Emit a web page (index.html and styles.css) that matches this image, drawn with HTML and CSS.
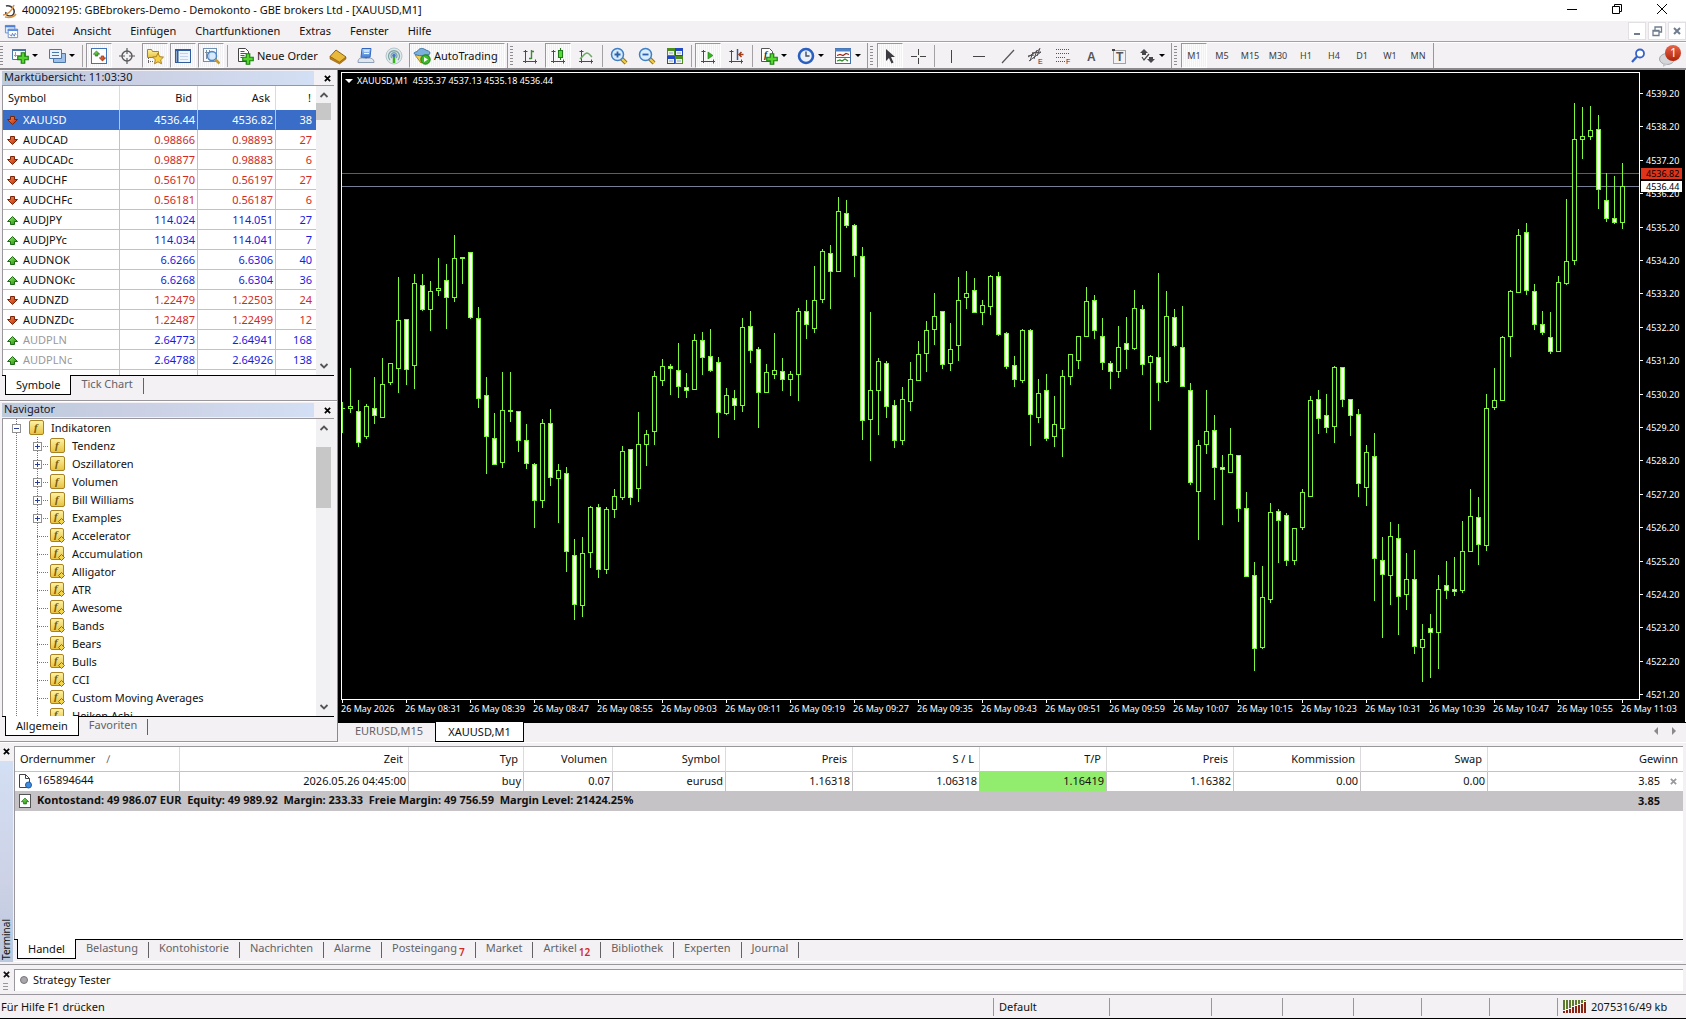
FILE: index.html
```html
<!DOCTYPE html>
<html lang="de">
<head>
<meta charset="utf-8">
<title>400092195: GBEbrokers-Demo - Demokonto</title>
<link rel="stylesheet" href="styles.css">
</head>
<body>
<svg class="defs" width="0" height="0" aria-hidden="true">
  <defs>
    <linearGradient id="gYellow" x1="0" y1="0" x2="0" y2="1"><stop offset="0" stop-color="#fdf3a8"/><stop offset="1" stop-color="#e9c23e"/></linearGradient>
    <linearGradient id="gRed" x1="0" y1="0" x2="1" y2="1"><stop offset="0" stop-color="#ff8a50"/><stop offset="1" stop-color="#b02a08"/></linearGradient>
    <linearGradient id="gGreen" x1="0" y1="0" x2="1" y2="1"><stop offset="0" stop-color="#90f060"/><stop offset="1" stop-color="#1f8a10"/></linearGradient>
    <linearGradient id="gBlue" x1="0" y1="0" x2="0" y2="1"><stop offset="0" stop-color="#b9dcff"/><stop offset="1" stop-color="#3f78cf"/></linearGradient>
    <linearGradient id="gBall" x1="0" y1="0" x2="0" y2="1"><stop offset="0" stop-color="#e8644a"/><stop offset="1" stop-color="#b02408"/></linearGradient>
    <symbol id="down" viewBox="0 0 11 11"><path d="M3.500 1.500h4v3h3L5.500 9.500 .500 4.500h3z" fill="url(#gRed)" stroke="#7c2408"/></symbol>
    <symbol id="up" viewBox="0 0 11 11"><path d="M3.500 9.500h4v-3h3L5.500 1.500 .500 6.500h3z" fill="url(#gGreen)" stroke="#1c6a12"/></symbol>
    <symbol id="fx" viewBox="0 0 15 15"><rect x=".5" y=".5" width="14" height="14" rx="1.500" fill="url(#gYellow)" stroke="#a98222"/><text x="5" y="11" class="glyph-f">f</text></symbol>
    <symbol id="fxd" viewBox="0 0 15 15"><rect x=".5" y=".5" width="13" height="13" rx="1.500" fill="url(#gYellow)" stroke="#a98222"/><text x="4" y="10" class="glyph-f">f</text><path d="M11.500 8.500l3 3-3 3-3-3z" fill="#f3d54c" stroke="#8f6a10"/></symbol>
    <symbol id="plus" viewBox="0 0 9 9"><rect x=".5" y=".5" width="8" height="8" fill="#fff" stroke="#919191"/><path d="M2 4.500h5M4.500 2v5" stroke="#2a3f9c"/></symbol>
    <symbol id="minus" viewBox="0 0 9 9"><rect x=".5" y=".5" width="8" height="8" fill="#fff" stroke="#919191"/><path d="M2 4.500h5" stroke="#2a3f9c"/></symbol>
    <symbol id="addp" viewBox="0 0 12 12"><path d="M4.500 1.500h3v3h3v3h-3v3h-3v-3h-3v-3h3z" fill="#55d62e" stroke="#1b7f12"/></symbol>
    <symbol id="axes" viewBox="0 0 18 18"><path d="M4.500 3v13M2.500 4.500h4M2 14.500h14M14.500 12.500v4" fill="none" stroke="#4b4b4f"/></symbol>
    <symbol id="x" viewBox="0 0 8 8"><path d="M1 1l6 6M7 1L1 7" stroke="currentColor" stroke-width="2"/></symbol>
    <symbol id="chevU" viewBox="0 0 10 10"><path d="M1.500 7L5 3.500 8.500 7" fill="none" stroke="#555" stroke-width="1.800"/></symbol>
    <symbol id="chevD" viewBox="0 0 10 10"><path d="M1.500 3L5 6.500 8.500 3" fill="none" stroke="#555" stroke-width="1.800"/></symbol>
  </defs>
</svg>

<header class="titlebar">
  <svg class="app-icon" viewBox="0 0 16 16"><path d="M4 3c3-1 7 1 8 4s-1 6-4 6-5-2-4-4" fill="none" stroke="#3d3d40" stroke-width="1.600"/><path d="M1 12c4 0 9-4 11-10M3 14c5 1 9 0 11-3" fill="none" stroke="#d9924a" stroke-width="1.600"/></svg>
  <span class="title-text">400092195: GBEbrokers-Demo - Demokonto - GBE brokers Ltd - [XAUUSD,M1]</span>
  <div class="window-buttons">
    <button aria-label="Minimieren"><svg viewBox="0 0 12 12"><path d="M1 6.500h10" stroke="#000"/></svg></button>
    <button aria-label="Wiederherstellen"><svg viewBox="0 0 12 12"><path d="M1.500 3.500h7v7h-7zM3.500 3V1.500h7v7H9" fill="none" stroke="#000"/></svg></button>
    <button aria-label="Schließen"><svg viewBox="0 0 12 12"><path d="M1 1l10 10M11 1L1 11" stroke="#000"/></svg></button>
  </div>
</header>

<nav class="menubar">
  <svg class="menu-icon" viewBox="0 0 16 16"><path d="M1.500 1.500h10v8h-10z" fill="#dfeafb" stroke="#6d8fc9"/><path d="M1 2.500h11" stroke="#4f7fd0" stroke-width="2"/><path d="M4.500 5.500h10v9h-10z" fill="#fff" stroke="#6d8fc9"/><path d="M4 6.500h11" stroke="#5b8be0" stroke-width="2"/><path d="M6 11l2 2 1-3 2 3 1-3 1 1" fill="none" stroke="#4f78c0"/></svg>
  <button>Datei</button><button>Ansicht</button><button>Einfügen</button><button>Chartfunktionen</button><button>Extras</button><button>Fenster</button><button>Hilfe</button>
  <div class="mdi-buttons">
    <button aria-label="Chart minimieren"><svg viewBox="0 0 12 12"><path d="M3 9h6" stroke="#6f7c8e" stroke-width="2"/></svg></button>
    <button aria-label="Chart wiederherstellen"><svg viewBox="0 0 12 12"><path d="M2 5.500h6v5H2zM4 5V2h6.500v5H8M4 2h6M2 6h6" fill="none" stroke="#6f7c8e" stroke-width="1.300"/></svg></button>
    <button aria-label="Chart schließen"><svg viewBox="0 0 12 12"><path d="M3 3l6 6M9 3L3 9" stroke="#6f7c8e" stroke-width="2"/></svg></button>
  </div>
</nav>

<div class="toolbar">
  <div class="group first">
    <i class="grip"></i>
    <button class="split" aria-label="Neuer Chart"><svg viewBox="0 0 18 18"><path d="M1.500 2.500h13v10h-13z" fill="#fff" stroke="#4a77a8"/><path d="M1 3h14" stroke="#4a77a8" stroke-width="2"/><path d="M4.500 5v5M3 8.500h8" stroke="#7fa3cf"/><use href="#addp" x="5" y="4" width="14" height="14"/></svg><i class="caret"></i></button>
    <button class="split" aria-label="Profile"><svg viewBox="0 0 18 18"><path d="M5.500 6.500h12v9h-12z" fill="#9fc0ea" stroke="#4a77a8"/><path d="M1.500 2.500h12v9h-12z" fill="#e9f2fd" stroke="#4a77a8"/><path d="M4 5.500h7M4 8.500h7" stroke="#4a77a8"/></svg><i class="caret"></i></button>
    <i class="sep"></i>
    <button class="tb on" aria-label="Marktübersicht"><svg viewBox="0 0 18 18"><rect x="1.500" y="1.500" width="15" height="15" fill="#fff" stroke="#3f75b8"/><use href="#up" x="3" y="3" width="7" height="7"/><use href="#down" x="9" y="8" width="7" height="7"/></svg></button>
    <button class="tb" aria-label="Datenfenster"><svg viewBox="0 0 18 18"><circle cx="9" cy="9" r="5" fill="none" stroke="#5a5a5e" stroke-width="1.400"/><path d="M9 1v6M9 11v6M1 9h6M11 9h6" stroke="#5a5a5e" stroke-width="1.200"/></svg></button>
    <button class="tb on" aria-label="Navigator"><svg viewBox="0 0 18 18"><path d="M1.500 2.500h4l1 2h6v6h-11z" fill="url(#gYellow)" stroke="#a98222"/><path d="M2.500 11v6M2 14.500h5" stroke="#666" stroke-dasharray="1 1"/><path d="M12 6l1.700 3.700 3.800.4-2.800 2.700.8 4-3.500-2-3.500 2 .8-4L6.500 10l3.800-.3z" fill="#f7d044" stroke="#a98222"/></svg></button>
    <button class="tb on" aria-label="Terminal"><svg viewBox="0 0 18 18"><rect x="1.500" y="2.500" width="15" height="13" fill="#eef5fd" stroke="#2f5d9e"/><path d="M1 3h16M3.500 3v12" stroke="#2f5d9e" stroke-width="2"/><path d="M6 6.500h8M6 9.500h8M6 12.500h8" stroke="#c0d4ec"/></svg></button>
    <button class="tb on" aria-label="Strategietester"><svg viewBox="0 0 18 18"><rect x="1.500" y="1.500" width="13" height="13" fill="#f8fafd" stroke="#6f8fb5"/><path d="M4.500 3v9M7.500 3v9M3 5.500h9" stroke="#7d8fa5"/><circle cx="10" cy="9" r="4.500" fill="#cfe5fa" fill-opacity=".8" stroke="#4f87c6" stroke-width="1.500"/><path d="M13.500 12.500l4 4" stroke="#c99b22" stroke-width="2.500"/></svg></button>
    <i class="sep"></i>
    <button class="label-btn order"><svg viewBox="0 0 18 18"><path d="M2.500 1.500h7l3 3v10h-10z" fill="#fff" stroke="#444"/><path d="M4.500 4.500h4M4.500 6.500h6M4.500 8.500h4M4.500 10.500h2" stroke="#555"/><use href="#addp" x="5" y="5" width="14" height="14"/></svg>Neue Order</button>
    <button class="tb" aria-label="MetaEditor"><svg viewBox="0 0 18 18"><path d="M1 9.500L7 3l10 7-6.500 6z" fill="#e9b93c" stroke="#8e6212"/><path d="M1 9.500L10.500 15l6.500-5v2l-6.500 5L1 12z" fill="#b97d1a" stroke="#8e6212" stroke-width=".6"/></svg></button>
    <button class="tb" aria-label="MQL5"><svg viewBox="0 0 18 18"><path d="M5 1.500h9l-1 9H4z" fill="url(#gBlue)" stroke="#2f67bf"/><path d="M7 4h5M7 6.500h5" stroke="#fff"/><path d="M1 15.500c0-5 3-5 8-4 5-1 8 0 8 4z" fill="#dfe6ef" stroke="#8fa0b6"/></svg></button>
    <button class="tb" aria-label="Signale"><svg viewBox="0 0 18 18"><circle cx="9" cy="9" r="8" fill="#dfe9ec" stroke="#b4c5ca"/><path d="M5 13a5.500 5.500 0 1 1 8 0M7 11a3 3 0 1 1 4 0" fill="none" stroke="#7fa5a8" stroke-width="1.300"/><path d="M9 9v7" stroke="#37b51b" stroke-width="2.500"/><circle cx="9" cy="8.500" r="1.800" fill="#4a76c8"/></svg></button>
    <button class="label-btn auto on"><svg viewBox="0 0 18 18"><path d="M2 8l6 8 7-4 1-5z" fill="#f0cf55" stroke="#b08a20"/><path d="M1 6.500c0-2 3-1 4-3s4-3 7-1 5 1 5 4c-3 3-13 3-16 0z" fill="#7db1dd" stroke="#3f76a8"/><circle cx="12.500" cy="12.500" r="4.700" fill="#3dba28" stroke="#1a7d10"/><path d="M11 10l4 2.500-4 2.500z" fill="#fff"/></svg>AutoTrading</button>
  </div>
  <div class="group">
    <i class="grip"></i>
    <button class="tb" aria-label="Balkenchart"><svg viewBox="0 0 18 18"><use href="#axes" width="18" height="18"/><path d="M10.500 3v9M8 11.500h2.500M10.500 4.500H13" stroke="#3d8a35" stroke-width="1.400"/></svg></button>
    <button class="tb on" aria-label="Kerzenchart"><svg viewBox="0 0 18 18"><use href="#axes" width="18" height="18"/><path d="M11.500 1v12" stroke="#257a1c"/><rect x="9.500" y="3.500" width="4" height="7" fill="#4fdc33" stroke="#257a1c"/></svg></button>
    <button class="tb" aria-label="Linienchart"><svg viewBox="0 0 18 18"><use href="#axes" width="18" height="18"/><path d="M3 12c3-3 5-6 7-6s3 2 5 4" fill="none" stroke="#6aaa60" stroke-width="1.500"/></svg></button>
    <i class="sep"></i>
    <button class="tb" aria-label="Vergrößern"><svg viewBox="0 0 18 18"><path d="M11 11l5 5" stroke="#8f6a10" stroke-width="4"/><path d="M11 11l5 5" stroke="#f1cb48" stroke-width="2.400"/><circle cx="7.500" cy="7.500" r="6" fill="#d8ecfc" stroke="#3f7fc6" stroke-width="1.500"/><path d="M4.500 7.500h6M7.500 4.500v6" stroke="#2b62a8" stroke-width="1.800"/></svg></button>
    <button class="tb" aria-label="Verkleinern"><svg viewBox="0 0 18 18"><path d="M11 11l5 5" stroke="#8f6a10" stroke-width="4"/><path d="M11 11l5 5" stroke="#f1cb48" stroke-width="2.400"/><circle cx="7.500" cy="7.500" r="6" fill="#d8ecfc" stroke="#3f7fc6" stroke-width="1.500"/><path d="M4.500 7.500h6" stroke="#2b62a8" stroke-width="1.800"/></svg></button>
    <button class="tb" aria-label="Anordnen"><svg viewBox="0 0 18 18"><rect x="1" y="1" width="8" height="8" fill="#4d8f1e"/><rect x="9" y="1" width="8" height="8" fill="#2348c4"/><rect x="1" y="9" width="8" height="8" fill="#2348c4"/><rect x="9" y="9" width="8" height="8" fill="#4d8f1e"/><path d="M2 4h6v4H2zM10 4h6v4h-6zM2 12h6v4H2zM10 12h6v4h-6z" fill="#eef4ea"/><path d="M3 6h4M11 6h4M3 14h4M11 14h4" stroke="#8aa6d8"/></svg></button>
    <i class="sep"></i>
    <button class="tb on" aria-label="Automatisch scrollen"><svg viewBox="0 0 18 18"><use href="#axes" width="18" height="18"/><path d="M9 5l5 3.500L9 12z" fill="#35b51f" stroke="#257a1c" stroke-width=".6"/></svg></button>
    <button class="tb" aria-label="Chart verschieben"><svg viewBox="0 0 18 18"><use href="#axes" width="18" height="18"/><path d="M10.500 2v11" stroke="#2e5d9a" stroke-width="1.500"/><path d="M16.500 7.500h-4M14.500 5L12 7.500l2.500 2.500" fill="none" stroke="#a33c18" stroke-width="1.500"/></svg></button>
    <i class="sep"></i>
    <button class="split" aria-label="Indikatoren"><svg viewBox="0 0 18 18"><path d="M1.500 1.500h8l3 3v10h-11z" fill="#fff" stroke="#555"/><text x="4" y="11" class="glyph-d">f</text><use href="#addp" x="5" y="5" width="14" height="14"/></svg><i class="caret"></i></button>
    <button class="split" aria-label="Periodizität"><svg viewBox="0 0 18 18"><circle cx="9" cy="9" r="7" fill="#e8f1fb" stroke="#2a5fc0" stroke-width="2.600"/><path d="M9 4.500V9h3.500" fill="none" stroke="#44505e" stroke-width="1.400"/></svg><i class="caret"></i></button>
    <button class="split" aria-label="Vorlagen"><svg viewBox="0 0 18 18"><rect x="1.500" y="1.500" width="15" height="15" fill="#fff" stroke="#3f6faa"/><path d="M1 3h16" stroke="#4f82c4" stroke-width="3"/><path d="M3 8.500l3-1 3 1 3-2 3 1" fill="none" stroke="#9a2a18" stroke-width="1.300"/><path d="M2 10.500h14" stroke="#3f6faa"/><path d="M3 14l3-1 2 1 3-2 3 2" fill="none" stroke="#2f8a2a" stroke-width="1.300"/></svg><i class="caret"></i></button>
  </div>
  <div class="group">
    <i class="grip"></i>
    <button class="tb on" aria-label="Zeiger"><svg viewBox="0 0 18 18"><path d="M5 2v12l3-3 2.500 5.500 2-1L10 10h4z" fill="#3c3c40"/></svg></button>
    <button class="tb" aria-label="Fadenkreuz"><svg viewBox="0 0 18 18"><path d="M9.500 2v6M9.500 11v6M2 9.500h6M11 9.500h6" stroke="#444"/></svg></button>
    <i class="sep"></i>
    <button class="tb" aria-label="Vertikale Linie"><svg viewBox="0 0 18 18"><path d="M9.500 3v13" stroke="#444"/></svg></button>
    <button class="tb" aria-label="Horizontale Linie"><svg viewBox="0 0 18 18"><path d="M3 9.500h12" stroke="#444"/></svg></button>
    <button class="tb" aria-label="Trendlinie"><svg viewBox="0 0 18 18"><path d="M4 16L16 3" stroke="#555" stroke-width="1.200"/></svg></button>
    <button class="tb" aria-label="Kanal"><svg viewBox="0 0 18 18"><path d="M2 10L14 2M3 14L15 5M4 14L7 5M8 12L11 3M11 9l3-8M2 9l6-1M7 6l8-1" stroke="#4d4d50" fill="none"/><text x="12" y="17" class="glyph-s">E</text></svg></button>
    <button class="tb" aria-label="Fibonacci"><svg viewBox="0 0 18 18"><path d="M2 2.500h13M2 6.500h13M2 10.500h9M2 14.500h9" stroke="#555" stroke-dasharray="1 1"/><text x="12" y="17" class="glyph-s">F</text></svg></button>
    <button class="tb" aria-label="Text"><svg viewBox="0 0 18 18"><text x="5" y="14" class="glyph-a">A</text></svg></button>
    <button class="tb" aria-label="Textfeld"><svg viewBox="0 0 18 18"><rect x="3.500" y="3.500" width="12" height="13" fill="none" stroke="#555" stroke-dasharray="1 1"/><path d="M2 2h3v2H2z" fill="#444"/><text x="6" y="14" class="glyph-a">T</text></svg></button>
    <button class="split" aria-label="Pfeile"><svg viewBox="0 0 18 18"><path d="M6 2l4 4H8v2H4V6H2zM13 16l-4-4h2v-2h4v2h2z" fill="#48484c"/><path d="M4 10l2 3 5-6" fill="none" stroke="#48484c" stroke-width="1.200"/></svg><i class="caret"></i></button>
  </div>
  <div class="group">
    <i class="grip"></i>
    <button class="tb on">M1</button><button class="tb">M5</button><button class="tb">M15</button><button class="tb">M30</button><button class="tb">H1</button><button class="tb">H4</button><button class="tb">D1</button><button class="tb">W1</button><button class="tb">MN</button>
  </div>
  <div class="tool-right">
    <button aria-label="Suchen"><svg width="16" height="16" viewBox="0 0 16 16"><circle cx="10" cy="5.500" r="4" fill="#fff" stroke="#3562c8" stroke-width="1.800"/><path d="M7 8.500L2 14" stroke="#3562c8" stroke-width="2.200"/></svg></button>
    <button class="notify" aria-label="Nachrichten"><svg width="24" height="24" viewBox="0 0 24 24"><ellipse cx="9" cy="15" rx="7.500" ry="5.500" fill="#d4d6da" stroke="#a4a6aa"/><path d="M5 19l0 4 5-3z" fill="#c5c7cb"/><circle cx="15" cy="9" r="8" fill="url(#gBall)"/></svg><span class="notify-count">1</span></button>
  </div>
</div>

<main class="workspace">
  <aside class="dock">
    <section class="panel market">
      <header class="panel-title"><span>Marktübersicht: 11:03:30</span><button aria-label="Marktübersicht schließen"><svg viewBox="0 0 8 8"><use href="#x"/></svg></button></header>
      <div class="panel-box">
        <div class="panel-content">
          <table class="quotes">
            <colgroup><col class="c-sym"><col class="c-bid"><col class="c-ask"><col class="c-spr"></colgroup>
            <thead><tr><th>Symbol</th><th>Bid</th><th>Ask</th><th>!</th></tr></thead>
            <tbody>
              <tr class="sel"><td><svg><use href="#down"/></svg>XAUUSD</td><td>4536.44</td><td>4536.82</td><td>38</td></tr>
              <tr class="dn"><td><svg><use href="#down"/></svg>AUDCAD</td><td>0.98866</td><td>0.98893</td><td>27</td></tr>
              <tr class="dn"><td><svg><use href="#down"/></svg>AUDCADc</td><td>0.98877</td><td>0.98883</td><td>6</td></tr>
              <tr class="dn"><td><svg><use href="#down"/></svg>AUDCHF</td><td>0.56170</td><td>0.56197</td><td>27</td></tr>
              <tr class="dn"><td><svg><use href="#down"/></svg>AUDCHFc</td><td>0.56181</td><td>0.56187</td><td>6</td></tr>
              <tr class="up"><td><svg><use href="#up"/></svg>AUDJPY</td><td>114.024</td><td>114.051</td><td>27</td></tr>
              <tr class="up"><td><svg><use href="#up"/></svg>AUDJPYc</td><td>114.034</td><td>114.041</td><td>7</td></tr>
              <tr class="up"><td><svg><use href="#up"/></svg>AUDNOK</td><td>6.6266</td><td>6.6306</td><td>40</td></tr>
              <tr class="up"><td><svg><use href="#up"/></svg>AUDNOKc</td><td>6.6268</td><td>6.6304</td><td>36</td></tr>
              <tr class="dn"><td><svg><use href="#down"/></svg>AUDNZD</td><td>1.22479</td><td>1.22503</td><td>24</td></tr>
              <tr class="dn"><td><svg><use href="#down"/></svg>AUDNZDc</td><td>1.22487</td><td>1.22499</td><td>12</td></tr>
              <tr class="up off"><td><svg><use href="#up"/></svg>AUDPLN</td><td>2.64773</td><td>2.64941</td><td>168</td></tr>
              <tr class="up off"><td><svg><use href="#up"/></svg>AUDPLNc</td><td>2.64788</td><td>2.64926</td><td>138</td></tr>
              <tr class="up"><td></td><td></td><td></td><td></td></tr>
            </tbody>
          </table>
        </div>
        <div class="scroll"><svg><use href="#chevU"/></svg><i class="thumb short"></i><svg class="end"><use href="#chevD"/></svg></div>
      </div>
      <div class="tabs"><button class="active">Symbole</button><button>Tick Chart</button></div>
    </section>
    <section class="panel navigator">
      <header class="panel-title"><span>Navigator</span><button aria-label="Navigator schließen"><svg viewBox="0 0 8 8"><use href="#x"/></svg></button></header>
      <div class="panel-box">
        <div class="panel-content">
          <ul class="tree">
            <li><svg class="exp"><use href="#minus"/></svg><svg class="fx"><use href="#fx"/></svg>Indikatoren
              <ul>
                <li><svg class="exp"><use href="#plus"/></svg><svg class="fx"><use href="#fx"/></svg>Tendenz</li>
                <li><svg class="exp"><use href="#plus"/></svg><svg class="fx"><use href="#fx"/></svg>Oszillatoren</li>
                <li><svg class="exp"><use href="#plus"/></svg><svg class="fx"><use href="#fx"/></svg>Volumen</li>
                <li><svg class="exp"><use href="#plus"/></svg><svg class="fx"><use href="#fx"/></svg>Bill Williams</li>
                <li><svg class="exp"><use href="#plus"/></svg><svg class="fx"><use href="#fxd"/></svg>Examples</li>
                <li><svg class="exp"></svg><svg class="fx"><use href="#fxd"/></svg>Accelerator</li>
                <li><svg class="exp"></svg><svg class="fx"><use href="#fxd"/></svg>Accumulation</li>
                <li><svg class="exp"></svg><svg class="fx"><use href="#fxd"/></svg>Alligator</li>
                <li><svg class="exp"></svg><svg class="fx"><use href="#fxd"/></svg>ATR</li>
                <li><svg class="exp"></svg><svg class="fx"><use href="#fxd"/></svg>Awesome</li>
                <li><svg class="exp"></svg><svg class="fx"><use href="#fxd"/></svg>Bands</li>
                <li><svg class="exp"></svg><svg class="fx"><use href="#fxd"/></svg>Bears</li>
                <li><svg class="exp"></svg><svg class="fx"><use href="#fxd"/></svg>Bulls</li>
                <li><svg class="exp"></svg><svg class="fx"><use href="#fxd"/></svg>CCI</li>
                <li><svg class="exp"></svg><svg class="fx"><use href="#fxd"/></svg>Custom Moving Averages</li>
                <li><svg class="exp"></svg><svg class="fx"><use href="#fxd"/></svg>Heiken Ashi</li>
              </ul>
            </li>
          </ul>
        </div>
        <div class="scroll"><svg><use href="#chevU"/></svg><i class="thumb long"></i><svg class="end"><use href="#chevD"/></svg></div>
      </div>
      <div class="tabs"><button class="active">Allgemein</button><button>Favoriten</button></div>
    </section>
  </aside>

  <section class="chart-area">
    <div class="chart">
      <div class="plot"><svg id="plot" width="100%" height="100%"></svg>
        <div class="chart-title"><i></i><span>XAUUSD,M1  4535.37 4537.13 4535.18 4536.44</span></div>
      </div>
      <svg id="scale" class="scale"></svg>
      <svg id="times" class="times"></svg>
    </div>
    <div class="tabs chart-tabs"><button>EURUSD,M15</button><button class="active">XAUUSD,M1</button><span class="arrows"><i class="left"></i><i class="right"></i></span></div>
  </section>
</main>

<section class="terminal">
  <div class="strip"><button aria-label="Terminal schließen"><svg viewBox="0 0 8 8"><use href="#x"/></svg></button><div class="strip-bar"><span>Terminal</span></div></div>
  <div class="terminal-main">
    <div class="orders-box">
      <table class="orders">
        <colgroup><col class="w165"><col class="w229"><col class="w115"><col class="w89"><col class="w113"><col class="w127"><col class="w127"><col class="w127"><col class="w127"><col class="w127"><col class="w127"><col class="w195"></colgroup>
        <thead><tr><th>Ordernummer <span class="sort">∕</span></th><th>Zeit</th><th>Typ</th><th>Volumen</th><th>Symbol</th><th>Preis</th><th>S / L</th><th>T/P</th><th>Preis</th><th>Kommission</th><th>Swap</th><th>Gewinn</th></tr></thead>
        <tbody>
          <tr><td><svg class="doc" viewBox="0 0 14 16"><path d="M1.500 1.500h6l4 4v9h-10z" fill="#fff" stroke="#444"/><path d="M7.500 1.500v4h4" fill="none" stroke="#444"/><circle cx="10.500" cy="12" r="3" fill="#3f8ade" stroke="#235a9e"/></svg>165894644</td><td>2026.05.26 04:45:00</td><td>buy</td><td>0.07</td><td>eurusd</td><td>1.16318</td><td>1.06318</td><td class="hit">1.16419</td><td>1.16382</td><td>0.00</td><td>0.00</td><td class="gain">3.85<button aria-label="Order schließen"><svg viewBox="0 0 8 8"><use href="#x"/></svg></button></td></tr>
          <tr class="sum"><td colspan="11"><svg class="doc" viewBox="0 0 14 16"><rect x="1.500" y="1.500" width="11" height="13" fill="#fff" stroke="#555"/><use href="#up" x="3" y="4" width="8" height="8"/></svg>Kontostand: 49 986.07 EUR  Equity: 49 989.92  Margin: 233.33  Freie Margin: 49 756.59  Margin Level: 21424.25%</td><td class="gain">3.85</td></tr>
        </tbody>
      </table>
    </div>
    <div class="tabs terminal-tabs"><button class="active">Handel</button><button>Belastung</button><button>Kontohistorie</button><button>Nachrichten</button><button>Alarme</button><button>Posteingang<sub>7</sub></button><button>Market</button><button>Artikel<sub>12</sub></button><button>Bibliothek</button><button>Experten</button><button>Journal</button></div>
  </div>
</section>

<section class="tester">
  <div class="tester-side"><button aria-label="Strategy Tester schließen"><svg viewBox="0 0 8 8"><use href="#x"/></svg></button><i></i></div>
  <div class="tester-box"><i class="dot"></i>Strategy Tester</div>
</section>

<footer class="status">
  <span class="help">Für Hilfe F1 drücken</span><span class="s116">Default</span><span class="s102"></span><span class="s71"></span><span class="s71"></span><span class="s68"></span><span class="s68"></span><span class="s68"></span>
  <span class="traffic"><svg width="24" height="13" viewBox="0 0 24 13"><path d="M1 0v10M4 0v9M7 0v8M10 0v6M13 0v5M16 0v4M19 0v3M22 0v1" stroke="#5c7a2c" stroke-width="2"/><path d="M1 11v2M4 10v3M7 9v4M10 7v6M13 6v7M16 5v8M19 4v9M22 2v11" stroke="#8a2412" stroke-width="2"/></svg>2075316/49 kb</span>
</footer>
<script src="chart.js"></script>
</body>
</html>
```
FILE: styles.css
```css
* { box-sizing: border-box; }
body {
  margin: 0;
  min-height: 100vh;
  display: flex;
  flex-direction: column;
  background: #f3f1f4;
  color: #111;
  font: 11px/16px "Noto Sans", "Open Sans", sans-serif;
  border-bottom: 1px solid #000;
}
button {
  font: inherit;
  color: inherit;
  background: none;
  border: 0;
  padding: 0;
  margin: 0;
}
ul { list-style: none; margin: 0; padding: 0; }
.defs { position: absolute; }
.glyph-f { font: italic bold 11px "Liberation Serif", serif; fill: #7a5a10; }
.glyph-d { font: italic bold 10px "Liberation Serif", serif; fill: #333; }
.glyph-s { font: 7px "Liberation Sans", sans-serif; fill: #333; }
.glyph-a { font: bold 12px "Liberation Sans", sans-serif; fill: #55555a; }

/* Title and menu */
.titlebar { display: flex; align-items: center; height: 21px; background: #fff; padding-left: 2px; }
.app-icon { width: 16px; height: 16px; margin-right: 4px; }
.title-text { flex: 1; padding-bottom: 2px; }
.window-buttons { display: flex; gap: 33px; padding-right: 18px; }
.window-buttons button { display: flex; padding-bottom: 4px; }
.window-buttons svg { width: 12px; height: 12px; }
.menubar { display: flex; align-items: center; gap: 19px; height: 21px; border-bottom: 1px solid #a3a1a4; padding-left: 4px; }
.menu-icon { width: 15px; height: 15px; margin-right: -11px; }
.mdi-buttons { display: flex; gap: 2px; margin-left: auto; }
.mdi-buttons button { display: grid; place-items: center; width: 18px; height: 18px; background: #fff; border: 1px solid #e2e0e4; }
.mdi-buttons svg { width: 12px; height: 12px; }

/* Toolbar */
.toolbar { display: flex; height: 28px; border-top: 1px solid #fff; border-bottom: 2px solid #8b898d; }
.group { display: flex; align-items: center; gap: 2px; padding: 0 2px; border-right: 1px solid #99979b; }
.group.first { padding-left: 0; }
.grip { width: 3px; height: 20px; margin-right: 2px; background: repeating-linear-gradient(#8f8d91 0 1px, #f3f1f4 1px 3px); }
.sep { width: 1px; height: 22px; margin: 0 1px; background: #a3a1a4; }
.tb { display: grid; place-items: center; width: 26px; height: 25px; font-size: 9px; line-height: 14px; color: #3d3d42; border: 1px solid transparent; }
.toolbar svg { display: block; }
.tb svg, .split svg, .label-btn svg { width: 18px; height: 18px; flex: none; }
.on { border: 1px solid; border-color: #99979b #fff #fff #99979b; background: repeating-linear-gradient(90deg, #fbfbfc 0 1px, #f1f0f3 1px 2px); }
.split { display: flex; align-items: center; gap: 3px; width: 35px; height: 25px; padding-left: 4px; }
.caret { border: 3px solid transparent; border-top: 3px solid #000; border-bottom: 0; }
.label-btn { display: flex; align-items: center; gap: 3px; height: 25px; padding-left: 5px; white-space: nowrap; }
.order { width: 92px; }
.auto { width: 96px; padding-left: 3px; }
.tool-right { display: flex; align-items: center; gap: 12px; margin-left: auto; padding-right: 4px; }
.notify { position: relative; }
.notify-count { position: absolute; left: 12px; top: 1px; color: #fff; font-size: 12px; }

/* Docked panels */
.workspace { display: flex; border-bottom: 1px solid #fff; }
.dock { width: 338px; flex: none; border-right: 1px solid #8b898d; border-bottom: 1px solid #99979b; }
.panel { padding: 1px 3px 0 2px; }
.market { border-bottom: 1px solid #99979b; height: 331px; }
.navigator { border-top: 1px solid #fff; }
.panel-title { display: flex; justify-content: space-between; align-items: center; height: 14px; line-height: 12px; color: #16162a; background: linear-gradient(90deg, #bccadc, #cbd0e4 40%, #d3dff4 94%, #f3f1f4 94%); padding: 0 3px 0 2px; }
.panel-title span { padding-bottom: 2px; }
.panel-title button, .strip button { display: grid; place-items: center; width: 8px; height: 8px; color: #000; }
.panel-title svg { width: 7px; height: 7px; }
.panel-box { display: flex; height: 290px; border-top: 1px solid #99979b; border-left: 1px solid #99979b; background: #fff; }
.navigator .panel-box { height: 298px; margin-top: 1px; }
.panel-content { flex: 1; overflow: hidden; }
.scroll { display: flex; flex-direction: column; align-items: center; width: 18px; background: #f1f0f3; padding: 4px 3px 4px 0; }
.scroll svg { width: 10px; height: 10px; flex: none; }
.scroll .end { margin-top: auto; }
.thumb { width: 15px; background: #c8c7c8; }
.short { height: 17px; margin-top: 3px; }
.long { height: 61px; margin-top: 14px; }

.tabs { display: flex; position: relative; height: 25px; padding-left: 3px; border-top: 1px solid #000; color: #646266; }
.tabs button { height: 16px; line-height: 12px; margin-top: 2px; padding: 0 10px 4px; border-right: 1px solid #646266; white-space: nowrap; }
.tabs button.active { height: 20px; line-height: 18px; margin-top: -1px; background: #fff; color: #111; border: solid #000; border-width: 0 1px 1px; padding: 0 10px; }

.quotes { width: 100%; table-layout: fixed; border-collapse: separate; border-spacing: 0; }
.quotes th { height: 24px; padding: 0 5px; font-weight: 400; text-align: right; border-right: 1px solid #dcdadd; }
.quotes th:first-child { text-align: left; }
.quotes td { height: 20px; padding: 0 2px; text-align: right; border-right: 1px solid #c4c2c5; border-bottom: 1px solid #c4c2c5; }
.quotes td:first-child { text-align: left; padding-left: 4px; color: #111; }
.quotes th:last-child, .quotes td:last-child { border-right: 0; }
.quotes td:last-child { padding-right: 4px; }
.quotes svg { width: 11px; height: 11px; margin-right: 5px; vertical-align: -2px; }
.c-sym { width: 117px; } .c-bid, .c-ask { width: 78px; } .c-spr { width: 40px; }
.dn td { color: #d22a1e; }
.up td { color: #1a1ae0; }
.quotes .off td:first-child { color: #9a989b; }
.quotes .sel td, .quotes .sel td:first-child { background: #3a6dc8; color: #fff; border-bottom-color: #3a6dc8; }

.tree { line-height: 18px; }
.tree li { white-space: nowrap; background: repeating-linear-gradient(#77757a 0 1px, transparent 1px 2px) 13px 0 / 1px 100% no-repeat; padding-left: 9px; }
.tree ul { margin-left: 12px; }
.tree ul li { height: 18px; background: repeating-linear-gradient(#77757a 0 1px, transparent 1px 2px) 13px 0 / 1px 100% no-repeat, repeating-linear-gradient(90deg, #77757a 0 1px, transparent 1px 2px) 13px 9px / 12px 1px no-repeat; }
.exp { width: 9px; height: 9px; margin-right: 8px; vertical-align: -1px; }
.fx { width: 15px; height: 15px; margin-right: 7px; vertical-align: -3px; }

/* Chart */
.chart-area { flex: 1; min-width: 0; }
.chart { display: grid; grid-template: 628px 21px / 1fr 45px; background: #000; padding: 2px 0 1px 3px; border-right: 1px solid #fff; height: 652px; }
.plot { position: relative; border: 1px solid #fff; overflow: hidden; }
.plot svg { display: block; }
.chart-title { position: absolute; left: 3px; top: 1px; display: flex; align-items: center; gap: 4px; color: #fff; font-size: 9px; line-height: 14px; white-space: pre; }
.chart-title i { border: 4px solid transparent; border-top-color: #fff; border-bottom: 0; }
.scale { width: 45px; height: 628px; }
.times { grid-column: 1 / 3; width: 100%; height: 21px; }
.scale text, .times text { font: 9px "Noto Sans", "Open Sans", sans-serif; fill: #fff; }
.scale .ask { fill: #000; }
.scale .bid { fill: #000; }
.chart-tabs { height: 20px; padding-left: 6px; padding-right: 8px; }
.chart-tabs button { border-right-color: transparent; }
.chart-tabs button:first-child { width: 91px; }
.chart-tabs button.active { width: 89px; }
.arrows { display: flex; gap: 14px; margin: 4px 2px 0 auto; }
.arrows i { height: 8px; border: 4px solid transparent; }
.arrows .left { border-right-color: #8b898d; border-left: 0; }
.arrows .right { border-left-color: #8b898d; border-right: 0; }

/* Terminal */
.terminal { flex: 1; display: flex; margin-top: 3px; border-bottom: 1px solid #99979b; padding-bottom: 2px; }
.strip { width: 14px; display: flex; flex-direction: column; }
.strip button { margin: 1px 0 6px 2px; }
.strip svg, .tester-side svg { width: 7px; height: 7px; }
.strip-bar { flex: 1; width: 13px; background: linear-gradient(#d3dff4, #cdd2e6 60%, #b9c8dc); display: flex; justify-content: center; align-items: flex-end; padding-bottom: 2px; }
.strip-bar span { writing-mode: vertical-rl; transform: rotate(180deg); line-height: 13px; font-size: 10px; }
.terminal-main { flex: 1; min-width: 0; display: flex; flex-direction: column; padding-right: 3px; }
.orders-box { flex: 1; background: #fff; border-top: 1px solid #99979b; border-left: 1px solid #99979b; }
.orders { width: 100%; table-layout: fixed; border-collapse: separate; border-spacing: 0; }
.orders th { height: 25px; padding: 0 5px 1px; font-weight: 400; text-align: right; border-right: 1px solid #dcdadd; border-bottom: 1px solid #c4c2c5; }
.orders td { height: 19px; line-height: 15px; padding: 0 2px 2px; text-align: right; border-right: 1px solid #c4c2c5; }
.orders th:first-child, .orders td:first-child { text-align: left; }
.orders td:first-child { padding-left: 3px; white-space: pre; }
.orders td:last-child, .orders th:last-child { border-right: 0; }
.sort { margin-left: 8px; color: #646266; }
.doc { width: 14px; height: 16px; margin-right: 5px; vertical-align: middle; }
.orders .hit { background: #92ec6e; }
.orders .gain { padding-right: 23px; position: relative; }
.gain button { position: absolute; right: 6px; top: 6px; width: 7px; height: 7px; color: #99979b; display: flex; }
.orders .sum td { height: 20px; background: #c5c3c6; border-right: 0; font-weight: 700; }
.w89 { width: 89px; } .w113 { width: 113px; } .w115 { width: 115px; } .w127 { width: 127px; }
.w165 { width: 165px; } .w195 { width: 195px; } .w229 { width: 229px; }
.terminal-tabs { height: 23px; border-bottom: 1px solid #fff; }
.terminal-tabs sub { color: #d22a1e; font-size: 10px; line-height: 0; font-weight: 600; margin-left: 2px; vertical-align: -4px; }

/* Tester and status */
.tester { display: flex; height: 30px; padding: 4px 3px 3px 0; border-bottom: 1px solid #99979b; }
.tester-side { width: 14px; padding: 2px 0 0 3px; display: flex; flex-direction: column; gap: 5px; }
.tester-side button { display: flex; }
.tester-side i { width: 5px; height: 8px; background: repeating-linear-gradient(#99979b 0 1px, transparent 1px 3px); }
.tester-box { flex: 1; display: flex; align-items: center; gap: 5px; background: #fff; border-top: 1px solid #99979b; border-left: 1px solid #99979b; padding: 0 0 2px 5px; }
.dot { width: 8px; height: 8px; border-radius: 50%; background: #a9a7ab; border: 1px solid #77757a; }
.status { display: flex; align-items: center; height: 23px; }
.status span { height: 18px; line-height: 18px; border-left: 1px solid #99979b; padding-left: 5px; }
.status .help { flex: 1; border-left: 0; padding-left: 1px; }
.s116 { width: 116px; } .s102 { width: 102px; } .s71 { width: 71px; } .s68 { width: 68px; }
.status .traffic { display: flex; align-items: center; gap: 4px; width: 129px; }
```
FILE: chart.js
```js
// Candles as [high, body top, body bottom, low, filled]; measured downwards
// from the series' top line, with `unit` steps to one pixel.
const series = [
  { top: 180, unit: 3, bars: [
    [666,684,687,759,0],[564,678,687,699,0],[660,693,789,801,1],[672,678,771,777,0],[591,684,708,732,1],
    [534,612,714,714,0],[549,549,609,615,0],[291,420,567,639,0],[417,417,570,615,1],[282,309,558,627,0],
    [282,315,390,393,1],[303,333,390,453,0],[234,324,333,348,0],[252,300,354,447,1],[165,234,354,366,0],
    [231,231,237,312,0],[216,216,414,417,1],[381,414,657,684,1],[591,645,771,882,1],[699,774,855,855,1],
    [576,690,849,864,0],[576,690,696,726,0],[693,693,783,816,1],[732,780,852,867,1],[849,852,963,1044,1],
    [717,729,963,984,0],[687,729,894,918,1],[852,870,897,1029,0],[861,879,1116,1176,1],[1077,1125,1275,1320,1],
    [1071,1119,1278,1311,0],[978,981,1119,1164,0],[972,981,1170,1194,1],[981,987,1170,1182,0],[927,948,990,1014,0],
    [798,813,954,960,0],[807,807,954,975,1],[696,792,927,966,0],[750,762,795,858,0],[573,588,756,795,0],
    [537,558,603,618,0],[552,558,567,645,1],[489,570,621,654,1],[579,621,633,654,1],[462,480,630,630,0],
    [456,480,534,585,1],[447,528,573,576,1],[531,546,699,774,1],[624,645,702,705,0],[630,654,678,720,1],
    [414,441,678,696,0],[393,438,513,549,1],[501,507,639,744,1],[552,576,639,639,0],[459,570,585,597,0],
    [534,573,600,633,1],[573,582,600,648,0],[384,393,585,663,0],[360,393,435,477,1],[258,360,447,459,0],
    [207,213,360,369,0],[195,219,276,387,1],[51,93,276,276,0],[60,99,138,144,1],[132,135,228,291,1],
    [201,228,723,780,1],[396,630,720,843,0],[534,543,633,765,0],[543,549,681,714,1],[660,675,783,804,1],
    [621,657,783,795,0],[546,597,666,693,0],[483,522,603,603,0],[423,450,522,576,0],[339,408,450,495,0],
    [393,393,555,567,1],[429,507,552,573,0],[291,360,498,543,0],[273,339,354,387,0],[294,330,399,399,1],
    [360,375,399,435,0],[285,288,381,405,0],[276,288,465,468,1],[456,459,561,567,1],[528,555,600,621,1],
    [447,450,603,609,0],[447,450,705,798,1],[597,639,714,729,0],[582,630,777,783,1],[648,732,771,801,0],
    [570,588,747,831,0],[522,522,591,615,0],[468,468,543,567,0],[321,363,471,471,0],[345,360,453,477,1],
    [414,468,549,570,1],[543,549,576,627,1],[438,501,576,594,0],[411,489,510,567,1],[330,384,507,510,0],
    [375,387,555,585,1],[525,528,549,750,0],[279,531,609,663,1],[333,408,606,609,0],[387,411,498,501,1],
    [378,501,621,621,1],[609,630,909,915,1],[780,795,936,1080,0],[630,753,795,822,0],[705,750,864,960,1],
    [825,861,870,1035,1],[744,822,879,879,0]
  ] },
  { top: 90, unit: 2.529, bars: [
    [923,923,1060,1093,1],[1017,1057,1231,1231,1],[1194,1227,1413,1469,1],[1204,1282,1411,1413,0],[1044,1067,1289,1297,0],
    [1060,1065,1089,1196,1],[1071,1075,1191,1203,1],[1108,1108,1191,1201,0],[1009,1017,1108,1113,0],[774,784,1029,1029,0],
    [759,781,832,870,1],[769,822,855,867,1],[698,701,852,893,0],[701,701,784,802,1],[781,781,824,875,1],
    [807,819,996,1029,1],[898,916,1006,1052,0],[867,926,1186,1292,1],[1130,1189,1227,1386,1],[1093,1128,1229,1302,0],
    [1098,1133,1282,1378,1],[1171,1237,1277,1315,0],[1163,1237,1409,1426,1],[1351,1388,1411,1497,0],[1325,1361,1373,1487,1],
    [1227,1262,1373,1464,0],[1191,1252,1267,1287,1],[1181,1262,1270,1280,1],[1090,1166,1267,1272,0],[1009,1077,1168,1168,0],
    [1029,1080,1151,1201,1],[769,804,1153,1166,0],[703,784,804,809,0],[622,625,787,787,0],[506,508,625,675,0],
    [352,367,513,513,0],[336,359,508,518,1],[491,508,594,607,1],[559,592,615,620,1],[561,625,663,668,1],
    [470,486,663,663,0],[276,432,491,493,0],[33,124,432,443,0],[43,117,126,175,0],[40,101,119,126,0],
    [63,99,253,301,1],[210,278,326,334,1],[217,324,336,339,1],[185,243,336,352,0]
  ] }
];

const NS = 'http://www.w3.org/2000/svg';
const PLOT_TOP = 73;
const ASK_Y = 100;
const BID_Y = 113;

function add(parent, name, attrs, text) {
  const el = document.createElementNS(NS, name);
  for (const key in attrs) el.setAttribute(key, attrs[key]);
  if (text) el.textContent = text;
  parent.appendChild(el);
}

const plot = document.getElementById('plot');
const scale = document.getElementById('scale');
const times = document.getElementById('times');

add(plot, 'rect', { x: 0, y: ASK_Y, width: '100%', height: 1, fill: '#c8341c' });
add(plot, 'rect', { x: 0, y: BID_Y, width: '100%', height: 1, fill: '#778096' });

let index = 0;
for (const part of series) {
  for (const [high, top, bottom, low, filled] of part.bars) {
    const y = v => Math.round(part.top + v / part.unit) - PLOT_TOP;
    const x = index * 8;
    add(plot, 'rect', { x, y: y(high), width: 1, height: y(low) - y(high), fill: '#7cf73c' });
    const h = Math.max(1, y(bottom) - y(top));
    add(plot, 'rect', { x: x - 2, y: y(top), width: 5, height: h, fill: '#7cf73c' });
    if (h > 2) {
      const inner = { x: x - 1, y: y(top) + 1, width: 3, height: h - 2, fill: filled ? '#fff' : '#000' };
      add(plot, 'rect', inner);
    }
    index += 1;
  }
}

for (let i = 0; i <= 18; i += 1) {
  const y = Math.round(21 + i * 33.4);
  add(scale, 'rect', { x: 0, y, width: 3, height: 1, fill: '#fff' });
  add(scale, 'text', { x: 6, y: y + 4 }, (4539.2 - i).toFixed(2));
}
add(scale, 'rect', { x: 1, y: 109, width: 41, height: 11, fill: '#fff' });
add(scale, 'text', { x: 6, y: 118, class: 'bid' }, '4536.44');
add(scale, 'rect', { x: 1, y: 96, width: 41, height: 11, fill: '#e0341a' });
add(scale, 'text', { x: 6, y: 105, class: 'ask' }, '4536.82');

for (let i = 0; i <= 20; i += 1) {
  const minutes = 8 * 60 + 23 + i * 8;
  const clock = String(Math.floor(minutes / 60)).padStart(2, '0') + ':' + String(minutes % 60).padStart(2, '0');
  add(times, 'rect', { x: 1 + i * 64, y: 0, width: 1, height: 3, fill: '#fff' });
  add(times, 'text', { x: i * 64, y: 12 }, i === 0 ? '26 May 2026' : '26 May ' + clock);
}
```
